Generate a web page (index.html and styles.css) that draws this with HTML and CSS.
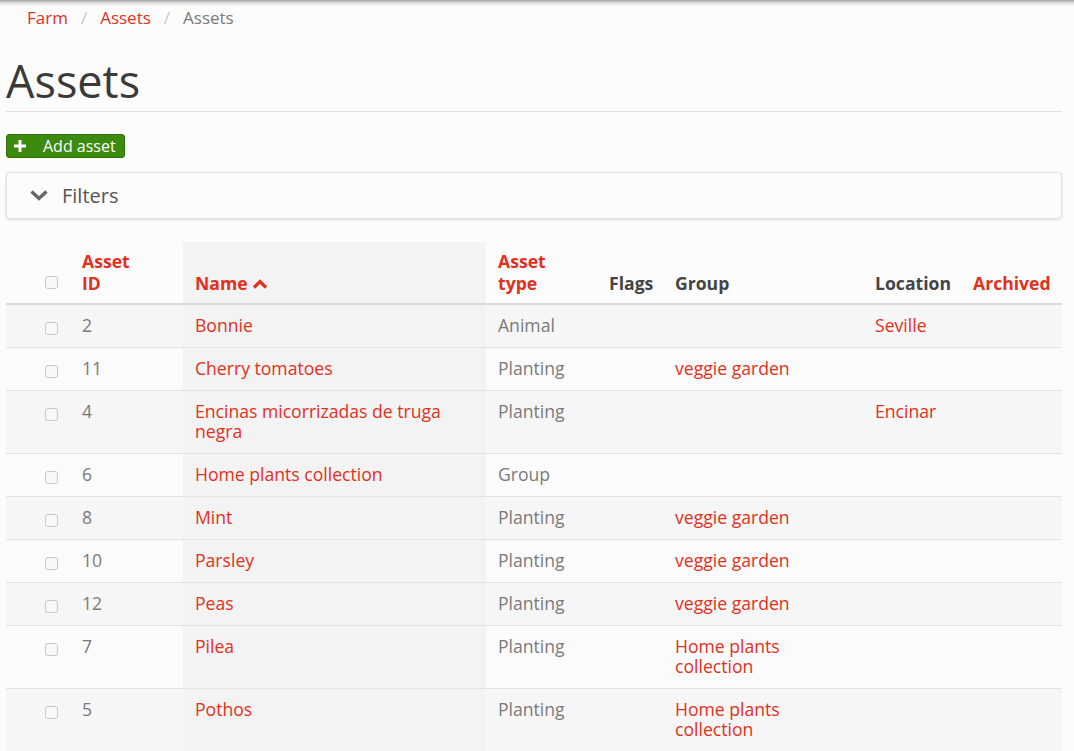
FILE: index.html
```html
<!DOCTYPE html>
<html>
<head>
<meta charset="utf-8">
<link rel="stylesheet" href="styles.css">
</head>
<body>
<div class="topshadow"></div>
<div class="page">
  <nav class="breadcrumb">
    <a href="#">Farm</a><span class="sep">/</span><a href="#">Assets</a><span class="sep">/</span><span class="current">Assets</span>
  </nav>
  <h1 class="title">Assets</h1>
  <div class="actions">
    <a class="btn-add" href="#"><svg class="plus" viewBox="0 0 12 12" width="12" height="12"><path d="M4.5 0h3v4.5H12v3H7.5V12h-3V7.5H0v-3h4.5z" fill="#fff"/></svg>Add asset</a>
  </div>
  <div class="filters">
    <svg class="chev" viewBox="0 0 18 12" width="18" height="12"><path d="M1.5 1.5 9 8.5l7.5-7" fill="none" stroke="#666" stroke-width="3.4"/></svg>
    <span>Filters</span>
  </div>
  <table class="assets">
    <colgroup>
      <col class="c-check"><col class="c-id"><col class="c-name"><col class="c-type"><col class="c-flags"><col class="c-group"><col class="c-loc"><col class="c-arch">
    </colgroup>
    <thead>
      <tr>
        <th class="chk"><span class="box"></span></th>
        <th><a href="#">Asset<br>ID</a></th>
        <th class="sorted"><a href="#">Name <svg class="caret" viewBox="0 0 16 10" width="16" height="10"><path d="M2 8.5 8 2.5l6 6" fill="none" stroke="#e0301e" stroke-width="3.2"/></svg></a></th>
        <th><a href="#">Asset<br>type</a></th>
        <th>Flags</th>
        <th>Group</th>
        <th>Location</th>
        <th><a href="#">Archived</a></th>
      </tr>
    </thead>
    <tbody>
      <tr><td class="chk"><span class="box"></span></td><td>2</td><td class="sorted"><a href="#">Bonnie</a></td><td>Animal</td><td></td><td></td><td><a href="#">Seville</a></td><td></td></tr>
      <tr><td class="chk"><span class="box"></span></td><td>11</td><td class="sorted"><a href="#">Cherry tomatoes</a></td><td>Planting</td><td></td><td><a href="#">veggie garden</a></td><td></td><td></td></tr>
      <tr><td class="chk"><span class="box"></span></td><td>4</td><td class="sorted"><a href="#">Encinas micorrizadas de truga negra</a></td><td>Planting</td><td></td><td></td><td><a href="#">Encinar</a></td><td></td></tr>
      <tr><td class="chk"><span class="box"></span></td><td>6</td><td class="sorted"><a href="#">Home plants collection</a></td><td>Group</td><td></td><td></td><td></td><td></td></tr>
      <tr><td class="chk"><span class="box"></span></td><td>8</td><td class="sorted"><a href="#">Mint</a></td><td>Planting</td><td></td><td><a href="#">veggie garden</a></td><td></td><td></td></tr>
      <tr><td class="chk"><span class="box"></span></td><td>10</td><td class="sorted"><a href="#">Parsley</a></td><td>Planting</td><td></td><td><a href="#">veggie garden</a></td><td></td><td></td></tr>
      <tr><td class="chk"><span class="box"></span></td><td>12</td><td class="sorted"><a href="#">Peas</a></td><td>Planting</td><td></td><td><a href="#">veggie garden</a></td><td></td><td></td></tr>
      <tr><td class="chk"><span class="box"></span></td><td>7</td><td class="sorted"><a href="#">Pilea</a></td><td>Planting</td><td></td><td><a href="#">Home plants collection</a></td><td></td><td></td></tr>
      <tr><td class="chk"><span class="box"></span></td><td>5</td><td class="sorted"><a href="#">Pothos</a></td><td>Planting</td><td></td><td><a href="#">Home plants collection</a></td><td></td><td></td></tr>
    </tbody>
  </table>
</div>
</body>
</html>
```

FILE: styles.css
```css
html, body {
  margin: 0;
  padding: 0;
  background: #fcfcfc;
  font-family: "Open Sans", "Liberation Sans", sans-serif;
  font-size: 17.6px;
  line-height: 20px;
  color: #7a7a7a;
  overflow: hidden;
}
a {
  color: #e2301c;
  text-decoration: none;
}
.topshadow {
  height: 6px;
  background: linear-gradient(to bottom, #a0a0a0 0, #d6d6d6 40%, rgba(252,252,252,0) 100%);
  margin-bottom: -6px;
  position: relative;
}
.page {
  padding: 0 12px 0 6px;
}
.breadcrumb {
  padding: 7px 0 0 21px;
  height: 22px;
  font-size: 17px;
  line-height: 22px;
}
.breadcrumb .sep {
  color: #c8c8c8;
  padding: 0 13px;
}
.breadcrumb .current {
  color: #7a7a7a;
}
.title {
  margin: 29px 0 0 0;
  padding-bottom: 8px;
  font-size: 45px;
  line-height: 45px;
  font-weight: 400;
  color: #3a3a3a;
  border-bottom: 1px solid #e0e0e0;
}
.actions {
  margin-top: 22px;
  height: 24px;
}
.btn-add {
  display: inline-flex;
  align-items: center;
  height: 24px;
  box-sizing: border-box;
  padding: 0 8px 0 7px;
  background: #3c8a0e;
  border: 1px solid #2f720a;
  border-radius: 3px;
  color: #fff;
  font-size: 16px;
  line-height: 22px;
}
.btn-add .plus {
  margin-right: 17px;
}
.filters {
  margin-top: 14px;
  height: 45px;
  border: 1px solid #e2e2e2;
  border-radius: 4px;
  box-shadow: 0 1px 3px rgba(0,0,0,0.12);
  background: #fcfcfc;
  display: flex;
  align-items: center;
  padding-left: 23px;
  font-size: 20px;
  color: #555;
}
.filters .chev {
  margin-right: 14px;
}
.assets {
  margin-top: 23px;
  width: 100%;
  border-collapse: collapse;
  table-layout: fixed;
}
.c-check { width: 64px; }
.c-id { width: 113px; }
.c-name { width: 303px; }
.c-type { width: 111px; }
.c-flags { width: 66px; }
.c-group { width: 200px; }
.c-loc { width: 98px; }
.c-arch { width: 101px; }
.assets th {
  text-align: left;
  vertical-align: bottom;
  font-weight: 700;
  color: #444;
  padding: 8px 10px 9px 12px;
  border-bottom: 2px solid #dcdcdc;
  line-height: 22px;
  white-space: nowrap;
}
.assets th a {
  color: #e2301c;
}
.assets th .caret {
  vertical-align: 1px;
}
.assets td {
  vertical-align: top;
  padding: 10px 10px 12px 12px;
  border-bottom: 1px solid #e2e2e2;
}
.assets .chk {
  padding-left: 39px;
  padding-right: 0;
}
.assets td.chk {
  padding-top: 17px;
}
.box {
  display: block;
  width: 11px;
  height: 11px;
  border: 1px solid #c8c8c8;
  border-radius: 3px;
  background: #f8f8f8;
}
.assets th.chk .box {
  margin-bottom: 5px;
}
.assets tbody tr:nth-child(odd) {
  background: #f6f6f6;
}
.assets tbody tr:nth-child(even) {
  background: #fbfbfb;
}
.assets .sorted {
  background: #f3f3f3;
}
.assets tbody tr td.sorted {
  background: #f3f3f3;
}
```
